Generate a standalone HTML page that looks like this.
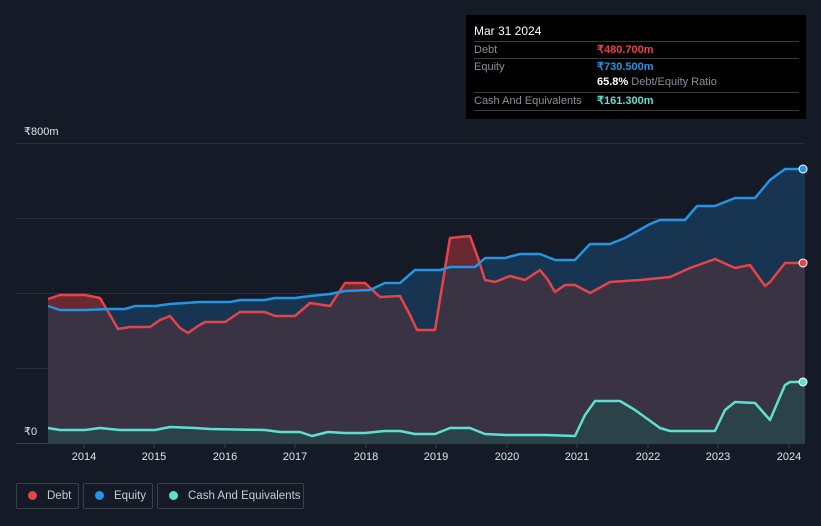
<!DOCTYPE html>
<html><head><meta charset="utf-8"><style>
body{margin:0;background:#151b26;width:821px;height:526px;overflow:hidden;font-family:"Liberation Sans",sans-serif;position:relative}
.tt{position:absolute;left:466px;top:15px;width:340px;height:104px;background:#000;color:#fff;font-size:11px}
.tt .r{position:absolute;left:8px;width:325px;border-top:1px solid #3a3a3a;height:17px;line-height:17px;color:#8a8f98}
.lg{position:absolute;top:483px;height:26px;border:1px solid #3a404a;border-radius:2px;color:#c8ccd2;font-size:11.5px;line-height:25px;box-sizing:border-box;white-space:nowrap;overflow:hidden}
.lg i{display:inline-block;width:9px;height:9px;border-radius:50%;margin:0 10px 0 11px;vertical-align:-1px}
</style></head><body>
<svg width="821" height="526" style="position:absolute;left:0;top:0">
<defs><clipPath id="eq"><path d="M48,306 L60,310 L85,310 L110,309 L125,309 L135,306 L155,306 L170,304 L200,302 L230,302 L240,300 L265,300 L275,298 L295,298 L310,296 L330,294 L345,291 L370,290 L385,283 L400,283 L415,270 L440,270 L450,267 L475,267 L485,258 L505,258 L520,254 L540,254 L555,260 L575,260 L590,244 L610,244 L625,238 L650,224 L660,220 L685,220 L697,206 L715,206 L735,198 L755,198 L770,180 L785,169 L805,169 L805,443 L48,443Z"/></clipPath></defs>
<g stroke="#2a303b" stroke-width="1"><line x1="16" y1="143.5" x2="805" y2="143.5"/><line x1="16" y1="218.5" x2="805" y2="218.5"/><line x1="16" y1="293.5" x2="805" y2="293.5"/><line x1="16" y1="368.5" x2="805" y2="368.5"/></g>
<path fill="#6a2830" d="M48,299 L60,295 L85,295 L100,298 L110,315 L118,329 L130,327 L150,327 L160,320 L170,316 L180,328 L188,333 L198,326 L205,322 L225,322 L240,312 L265,312 L275,316 L295,316 L310,303 L330,306 L345,283 L365,283 L380,297 L400,296 L410,315 L417,330 L435,330 L450,238 L470,236 L478,258 L485,280 L495,282 L510,276 L525,280 L540,270 L548,280 L555,292 L565,285 L575,285 L590,293 L610,282 L640,280 L670,277 L690,268 L715,259 L735,268 L750,265 L765,286 L770,282 L785,263 L805,263 L805,443 L48,443Z"/>
<path fill="#173550" d="M48,306 L60,310 L85,310 L110,309 L125,309 L135,306 L155,306 L170,304 L200,302 L230,302 L240,300 L265,300 L275,298 L295,298 L310,296 L330,294 L345,291 L370,290 L385,283 L400,283 L415,270 L440,270 L450,267 L475,267 L485,258 L505,258 L520,254 L540,254 L555,260 L575,260 L590,244 L610,244 L625,238 L650,224 L660,220 L685,220 L697,206 L715,206 L735,198 L755,198 L770,180 L785,169 L805,169 L805,443 L48,443Z"/>
<path fill="#393344" clip-path="url(#eq)" d="M48,299 L60,295 L85,295 L100,298 L110,315 L118,329 L130,327 L150,327 L160,320 L170,316 L180,328 L188,333 L198,326 L205,322 L225,322 L240,312 L265,312 L275,316 L295,316 L310,303 L330,306 L345,283 L365,283 L380,297 L400,296 L410,315 L417,330 L435,330 L450,238 L470,236 L478,258 L485,280 L495,282 L510,276 L525,280 L540,270 L548,280 L555,292 L565,285 L575,285 L590,293 L610,282 L640,280 L670,277 L690,268 L715,259 L735,268 L750,265 L765,286 L770,282 L785,263 L805,263 L805,443 L48,443Z"/>
<path fill="#2b4249" d="M48,428 L60,430 L85,430 L100,428 L120,430 L155,430 L170,427 L195,428 L210,429 L265,430 L280,432 L300,432 L312,436 L328,432 L345,433 L365,433 L385,431 L400,431 L415,434 L435,434 L450,428 L470,428 L485,434 L505,435 L545,435 L575,436 L585,415 L595,401 L620,401 L635,410 L660,428 L670,431 L715,431 L725,410 L735,402 L755,403 L770,420 L785,385 L790,382 L805,382 L805,443 L48,443Z"/>
<g fill="none" stroke-width="2.5" stroke-linejoin="round">
<path stroke="#e5444b" d="M48,299 L60,295 L85,295 L100,298 L110,315 L118,329 L130,327 L150,327 L160,320 L170,316 L180,328 L188,333 L198,326 L205,322 L225,322 L240,312 L265,312 L275,316 L295,316 L310,303 L330,306 L345,283 L365,283 L380,297 L400,296 L410,315 L417,330 L435,330 L450,238 L470,236 L478,258 L485,280 L495,282 L510,276 L525,280 L540,270 L548,280 L555,292 L565,285 L575,285 L590,293 L610,282 L640,280 L670,277 L690,268 L715,259 L735,268 L750,265 L765,286 L770,282 L785,263 L805,263"/>
<path stroke="#2394e6" d="M48,306 L60,310 L85,310 L110,309 L125,309 L135,306 L155,306 L170,304 L200,302 L230,302 L240,300 L265,300 L275,298 L295,298 L310,296 L330,294 L345,291 L370,290 L385,283 L400,283 L415,270 L440,270 L450,267 L475,267 L485,258 L505,258 L520,254 L540,254 L555,260 L575,260 L590,244 L610,244 L625,238 L650,224 L660,220 L685,220 L697,206 L715,206 L735,198 L755,198 L770,180 L785,169 L805,169"/>
<path stroke="#5fe0cf" d="M48,428 L60,430 L85,430 L100,428 L120,430 L155,430 L170,427 L195,428 L210,429 L265,430 L280,432 L300,432 L312,436 L328,432 L345,433 L365,433 L385,431 L400,431 L415,434 L435,434 L450,428 L470,428 L485,434 L505,435 L545,435 L575,436 L585,415 L595,401 L620,401 L635,410 L660,428 L670,431 L715,431 L725,410 L735,402 L755,403 L770,420 L785,385 L790,382 L805,382"/>
</g>
<line x1="16" y1="443.5" x2="805" y2="443.5" stroke="#3a404a"/>
<g stroke-width="1"><circle cx="803" cy="169" r="4" fill="#2394e6" stroke="#fff"/><circle cx="803" cy="263" r="4" fill="#e5444b" stroke="#fff"/><circle cx="803" cy="382" r="4" fill="#5fe0cf" stroke="#fff"/></g>
<g stroke="#3a404a"><line x1="84" y1="443" x2="84" y2="448"/><line x1="154" y1="443" x2="154" y2="448"/><line x1="225" y1="443" x2="225" y2="448"/><line x1="295" y1="443" x2="295" y2="448"/><line x1="366" y1="443" x2="366" y2="448"/><line x1="436" y1="443" x2="436" y2="448"/><line x1="507" y1="443" x2="507" y2="448"/><line x1="577" y1="443" x2="577" y2="448"/><line x1="648" y1="443" x2="648" y2="448"/><line x1="718" y1="443" x2="718" y2="448"/><line x1="789" y1="443" x2="789" y2="448"/></g>
<g fill="#e0e3e8" font-size="11" text-anchor="middle" font-family="Liberation Sans"><text x="84" y="460">2014</text><text x="154" y="460">2015</text><text x="225" y="460">2016</text><text x="295" y="460">2017</text><text x="366" y="460">2018</text><text x="436" y="460">2019</text><text x="507" y="460">2020</text><text x="577" y="460">2021</text><text x="648" y="460">2022</text><text x="718" y="460">2023</text><text x="789" y="460">2024</text></g>
<g fill="#e0e3e8" font-size="11" font-family="Liberation Sans"><text x="24" y="135">₹800m</text><text x="24" y="435">₹0</text></g>
</svg>
<div class="tt">
<div style="position:absolute;left:8px;top:9px;font-size:12px">Mar 31 2024</div>
<div class="r" style="top:26px">Debt<span style="position:absolute;left:123px;color:#e5444b;font-weight:bold">₹480.700m</span></div>
<div class="r" style="top:43px">Equity<span style="position:absolute;left:123px;color:#2394e6;font-weight:bold">₹730.500m</span></div>
<div style="position:absolute;left:131px;top:61px;color:#8a8f98"><b style="color:#fff">65.8%</b> Debt/Equity Ratio</div>
<div class="r" style="top:77px;border-bottom:1px solid #3a3a3a">Cash And Equivalents<span style="position:absolute;left:123px;color:#5fe0cf;font-weight:bold">₹161.300m</span></div>
</div>
<div class="lg" style="left:16px;width:63px"><i style="background:#e5444b"></i>Debt</div>
<div class="lg" style="left:83px;width:70px"><i style="background:#2394e6"></i>Equity</div>
<div class="lg" style="left:157px;width:147px"><i style="background:#5fe0cf"></i>Cash And Equivalents</div>
</body></html>
